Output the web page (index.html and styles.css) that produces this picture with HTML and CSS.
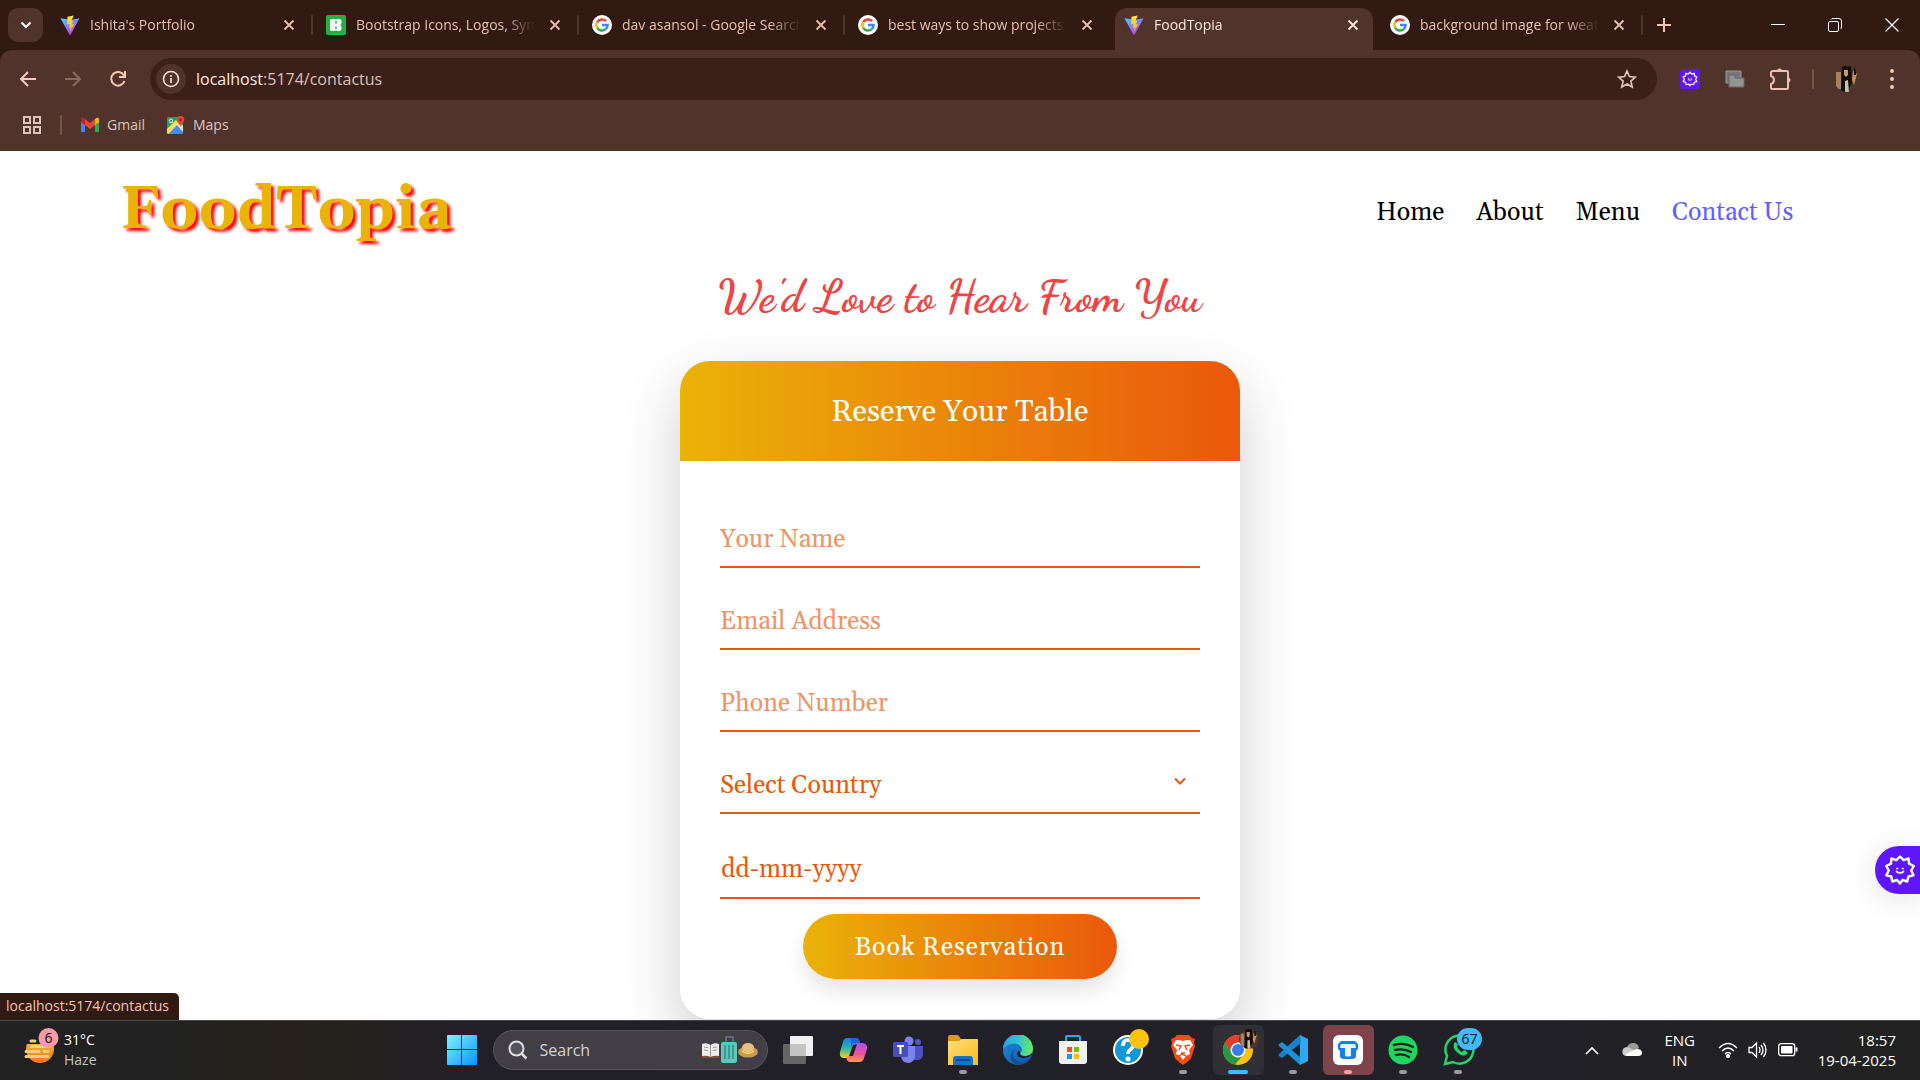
FILE: index.html
```html
<!DOCTYPE html>
<html lang="en">
<head>
<meta charset="utf-8">
<title>FoodTopia</title>
<link rel="stylesheet" href="styles.css">
</head>
<body>
<svg class="defs" width="0" height="0" aria-hidden="true">
  <defs>
    <linearGradient id="vitePurple" x1="0" y1="0" x2="0.7" y2="1"><stop offset="0" stop-color="#41d1ff"/><stop offset="1" stop-color="#bd34fe"/></linearGradient>
    <linearGradient id="viteBolt" x1="0" y1="0" x2="0" y2="1"><stop offset="0" stop-color="#ffea3a"/><stop offset="1" stop-color="#ffa800"/></linearGradient>
    <linearGradient id="winBlue" x1="0" y1="0" x2="1" y2="1"><stop offset="0" stop-color="#7df3ff"/><stop offset="1" stop-color="#0a93fb"/></linearGradient>
    <linearGradient id="folderGold" x1="0" y1="0" x2="1" y2="1"><stop offset="0" stop-color="#ffe07a"/><stop offset="1" stop-color="#fbb91a"/></linearGradient>
    <linearGradient id="edgeGreen" x1="0" y1="0.4" x2="1" y2="0.5"><stop offset="0" stop-color="#2aa5e0"/><stop offset="0.5" stop-color="#2fc6cf"/><stop offset="1" stop-color="#6cea52"/></linearGradient>
    <linearGradient id="edgeBlue" x1="0" y1="0" x2="1" y2="1"><stop offset="0" stop-color="#1c8fe0"/><stop offset="1" stop-color="#1250a0"/></linearGradient>
    <linearGradient id="copLeft" x1="0" y1="0" x2="0" y2="1"><stop offset="0" stop-color="#1b7af0"/><stop offset="0.5" stop-color="#29b6a8"/><stop offset="1" stop-color="#f5d51f"/></linearGradient>
    <linearGradient id="copRight" x1="0" y1="0" x2="0" y2="1"><stop offset="0" stop-color="#a84ef0"/><stop offset="0.6" stop-color="#f3558f"/><stop offset="1" stop-color="#ff9a4d"/></linearGradient>
    <linearGradient id="hazeSun" x1="0" y1="0" x2="0" y2="1"><stop offset="0" stop-color="#ffc830"/><stop offset="1" stop-color="#f0761a"/></linearGradient>
    <clipPath id="avatarClip"><circle cx="13" cy="13" r="13"/></clipPath>
    <symbol id="vite" viewBox="0 0 24 24"><path d="M.5 4 11.3 23.300a.9.9 0 0 0 1.500 0L23.500 4 13 5.700Z" fill="url(#vitePurple)"/><path d="M16.500.500 9 2 8.400 11.500l3-.6-.9 4.600 2.300-.6-1.500 6 6-10-3 .6 1.500-4.500-2.300.4Z" fill="url(#viteBolt)"/></symbol>
    <symbol id="google" viewBox="0 0 24 24"><circle cx="12" cy="12" r="12" fill="#fff"/><g fill="none" stroke-width="3"><path d="M6.300 8.600A6.700 6.700 0 0 1 16.900 7.400" stroke="#ea4335"/><path d="M6.300 15.400A6.700 6.700 0 0 1 6.300 8.600" stroke="#fbbc05"/><path d="M16.500 17A6.700 6.700 0 0 1 6.300 15.400" stroke="#34a853"/><path d="M12 12H18.700A6.700 6.700 0 0 1 16.500 17" stroke="#4285f4"/></g></symbol>
    <symbol id="icons8" viewBox="0 0 20 20"><rect width="20" height="20" rx="2" fill="#1fb141"/><path d="M4 5.500A1.500 1.500 0 0 1 5.500 4H9l1 1 1-1h2.500A2 2 0 0 1 15.500 6v2l-1 2 1 2v2a2 2 0 0 1-2 2H11l-1-1-1 1H5.500A1.500 1.500 0 0 1 4 14.500Z" fill="#fff"/><path d="M10 6v2.500M10 11.500V14" stroke="#1fb141" stroke-width="1.500"/></symbol>
    <symbol id="close" viewBox="0 0 12 12"><path d="m1.500 1.500 9 9m0-9-9 9" stroke="currentColor" stroke-width="1.800" fill="none"/></symbol>
    <symbol id="face" viewBox="0 0 32 32"><path d="M16 2.500 19.700 6.200 24.600 4.500 25 9.700 29.800 12 27.200 16.500 29.500 21.300 24.500 22.500 23.200 27.500 18.500 26 16 29.500 13 26 8.300 27.500 7.300 22.500 2.300 21.300 4.800 16.500 2.200 12 7 9.700 7.400 4.500 12.300 6.200Z" fill="none" stroke="#fff" stroke-width="2.400" stroke-linejoin="round"/><path d="M13 14.500h.5m5 0h.5M12.500 17.500q3.500 2.800 7 0" fill="none" stroke="#fff" stroke-width="1.700" stroke-linecap="round"/></symbol>
    <symbol id="portrait" viewBox="0 0 26 26"><g clip-path="url(#avatarClip)"><path fill="#4a382a" d="M0 0h26v26H0z"/><path d="M2 6h5v17H2z" fill="#a08358"/><path d="M8 0h9l1 17-5 9H7Z" fill="#100d0b"/><path d="M10 4h4v5l-2 2-2-2Z" fill="#c99974"/><path d="m11 15 3-1 1 13h-4Z" fill="#cdbf9f"/><path d="m19 5 4 3-3 11-2-5Z" fill="#c58e5c"/><path d="M20 0h2v9h-2z" fill="#17110d"/></g></symbol>
  </defs>
</svg>

<header class="browser">
  <div class="tabstrip">
    <button class="tab-search" aria-label="Search tabs"><svg width="12" height="8" viewBox="0 0 12 8"><path d="m1.500 1.500 4.500 4.500 4.500-4.500" fill="none" stroke="#fff" stroke-width="2"/></svg></button>
    <nav class="tabs" aria-label="Tabs">
      <div class="tab"><svg class="favicon"><use href="#vite"/></svg><span class="tab-label">Ishita's Portfolio</span><button class="tab-close" aria-label="Close tab"><svg><use href="#close"/></svg></button></div>
      <div class="tab"><svg class="favicon"><use href="#icons8"/></svg><span class="tab-label">Bootstrap Icons, Logos, Symbols</span><button class="tab-close" aria-label="Close tab"><svg><use href="#close"/></svg></button></div>
      <div class="tab"><svg class="favicon"><use href="#google"/></svg><span class="tab-label">dav asansol - Google Search</span><button class="tab-close" aria-label="Close tab"><svg><use href="#close"/></svg></button></div>
      <div class="tab before-active"><svg class="favicon"><use href="#google"/></svg><span class="tab-label">best ways to show projects on</span><button class="tab-close" aria-label="Close tab"><svg><use href="#close"/></svg></button></div>
      <div class="tab active"><svg class="favicon"><use href="#vite"/></svg><span class="tab-label">FoodTopia</span><button class="tab-close" aria-label="Close tab"><svg><use href="#close"/></svg></button></div>
      <div class="tab"><svg class="favicon"><use href="#google"/></svg><span class="tab-label">background image for weather</span><button class="tab-close" aria-label="Close tab"><svg><use href="#close"/></svg></button></div>
    </nav>
    <button class="new-tab" aria-label="New tab"><svg width="14" height="14" viewBox="0 0 14 14"><path d="M7 0v14M0 7h14" stroke="#f2c4b3" stroke-width="2"/></svg></button>
    <div class="window-controls">
      <button aria-label="Minimize"><svg width="14" height="14"><path d="M0 6.500h14" stroke="#fff"/></svg></button>
      <button aria-label="Restore"><svg width="14" height="14" fill="none" stroke="#fff"><rect x=".5" y="3.500" width="10" height="10" rx="1.500"/><path d="M3 1.500q.5-1 2-1h6q2.500 0 2.500 2.500v6q0 1.500-1 2"/></svg></button>
      <button aria-label="Close window"><svg width="14" height="14"><path d="m.5.500 13 13m0-13-13 13" stroke="#fff" stroke-width="1.200"/></svg></button>
    </div>
  </div>
  <div class="toolbar">
    <button class="tool" aria-label="Back"><svg width="18" height="18" viewBox="0 0 18 18"><path d="M17 9H2m7-7L2 9l7 7" fill="none" stroke="#f5c9b9" stroke-width="2"/></svg></button>
    <button class="tool" aria-label="Forward"><svg width="18" height="18" viewBox="0 0 18 18"><path d="M1 9h15M9 2l7 7-7 7" fill="none" stroke="#8b6a60" stroke-width="2"/></svg></button>
    <button class="tool" aria-label="Reload"><svg width="18" height="18" viewBox="0 0 18 18"><path d="M15.500 11A6.800 6.800 0 1 1 15 5.500M16 1v6h-6" fill="none" stroke="#f5c9b9" stroke-width="2"/></svg></button>
    <div class="omnibox">
      <button class="site-info" aria-label="Site information"><svg width="18" height="18" viewBox="0 0 18 18"><circle cx="9" cy="9" r="7.500" fill="none" stroke="#f3e2dc" stroke-width="1.600"/><path d="M9 8v5M9 5v1.700" stroke="#f3e2dc" stroke-width="1.700"/></svg></button>
      <span class="url"><b>localhost</b>:5174/contactus</span>
      <button class="star" aria-label="Bookmark this tab"><svg width="20" height="20" viewBox="0 0 20 20"><path d="m10 2 2.400 5.500 6 .6-4.500 4 1.300 5.900L10 14.900 4.800 18l1.300-5.900-4.500-4 6-.6Z" fill="none" stroke="#dcc4bc" stroke-width="1.700"/></svg></button>
    </div>
    <div class="extensions">
      <button class="tool purple" aria-label="Assistant extension"><svg width="16" height="16"><use href="#face"/></svg></button>
      <button class="tool" aria-label="Windows extension"><svg width="20" height="20" viewBox="0 0 20 20"><path d="M1 2h15v12H1z" fill="#777" stroke="#999"/><path d="M4 6h6v3h9v9H4z" fill="#939393" stroke="#666"/></svg></button>
      <button class="tool" aria-label="Extensions"><svg width="22" height="26" viewBox="0 0 22 26"><path d="M4 5h14q1 0 1 1v16q0 1-1 1H3q-1 0-1-1v-4q3-.8 3-4t-3-4V7q0-2 2-2Z" fill="none" stroke="#f0bfae" stroke-width="2" stroke-linejoin="round"/><path d="M8 5a2.500 2.500 0 0 1 5 0ZM19 11.500a2.500 2.500 0 0 1 0 5Z" fill="#f0bfae"/></svg></button>
      <span class="divider"></span>
      <button class="tool" aria-label="Profile"><svg width="26" height="26"><use href="#portrait"/></svg></button>
      <button class="tool" aria-label="Menu"><svg width="6" height="22" fill="#f5c9b9"><circle cx="3" cy="3" r="2"/><circle cx="3" cy="11" r="2"/><circle cx="3" cy="19" r="2"/></svg></button>
    </div>
  </div>
  <div class="bookmarks">
    <button class="apps" aria-label="Apps"><svg width="18" height="18" fill="none" stroke="#d9c3bb" stroke-width="2"><path d="M1 1h6v6H1zM11 1h6v6h-6zM1 11h6v6H1zM11 11h6v6h-6z"/></svg></button>
    <span class="divider"></span>
    <a href="#gmail"><svg width="18" height="18" viewBox="0 0 18 18"><path d="M0 5h4v11H1q-1 0-1-1Z" fill="#4285f4"/><path d="M14 5h4v10q0 1-1 1h-3Z" fill="#34a853"/><path d="M14 3q4-3 4 1v2l-4 3Z" fill="#fbbc04"/><path d="M0 4q0-4 4-1l5 4 5-4v6l-5 4-5-4-4-3Z" fill="#ea4335"/><path d="M0 6V4q0-4 4-1v6Z" fill="#c5221f"/></svg>Gmail</a>
    <a href="#maps"><svg width="18" height="18" viewBox="0 0 18 18"><rect y="1" width="16" height="17" rx="1.500" fill="#1fa463"/><path d="m0 16 9-8 7 8v1l-1 1H1z" fill="#4a89f3"/><path d="m0 13 9-9 3 3L1.500 18 0 17Z" fill="#fddc4e"/><path d="m9 8 7 8v-6l-3-4Z" fill="#e8e6dc"/><path d="M13.500 0a3.800 3.800 0 0 1 3.800 3.800c0 3-3 3.700-3.800 7.200-.8-3.500-3.800-4.200-3.800-7.200A3.800 3.800 0 0 1 13.500 0Z" fill="#ea4335"/><circle cx="13.500" cy="3.800" r="1.300" fill="#8c2018"/><circle cx="4" cy="5" r="1.700" fill="none" stroke="#fff"/></svg>Maps</a>
  </div>
</header>

<main class="page">
  <header class="site-header">
    <h1 class="logo">FoodTopia</h1>
    <nav class="site-nav" aria-label="Main">
      <a href="#home">Home</a><a href="#about">About</a><a href="#menu">Menu</a><a class="current" href="#contactus">Contact Us</a>
    </nav>
  </header>
  <h2 class="tagline">We'd Love to Hear From You</h2>
  <section class="card">
    <h3 class="card-title">Reserve Your Table</h3>
    <form class="form">
      <input class="field" type="text" aria-label="Your Name" placeholder="Your Name">
      <input class="field" type="email" aria-label="Email Address" placeholder="Email Address">
      <input class="field" type="tel" aria-label="Phone Number" placeholder="Phone Number">
      <div class="select-wrap">
        <select class="field" aria-label="Country"><option>Select Country</option></select>
        <svg class="select-arrow" width="12" height="8" viewBox="0 0 12 8"><path d="m1 1.500 5 5 5-5" fill="none" stroke="#ea580c" stroke-width="2"/></svg>
      </div>
      <input class="field date" type="text" aria-label="Date" placeholder="dd-mm-yyyy">
      <button class="submit" type="button">Book Reservation</button>
    </form>
  </section>
  <button class="assistant" aria-label="Open assistant"><svg width="32" height="32"><use href="#face"/></svg></button>
  <div class="status">localhost:5174/contactus</div>
</main>

<footer class="taskbar">
  <button class="weather">
    <svg width="36" height="38" viewBox="0 0 36 38"><circle cx="16" cy="21" r="14" fill="url(#hazeSun)"/><path d="M0 0h36v16H0z" fill="#212121"/><path d="M7 13h4M7 18.500h20M2 23.500h13m5 0h4M2 28.500h22" stroke="#edcf83" stroke-width="3" stroke-linecap="round"/><circle cx="24.500" cy="10" r="10" fill="#ff99a4"/><text x="24.500" y="15" text-anchor="middle" class="badge-text">6</text></svg>
    <span class="weather-text"><span>31°C</span><span class="muted">Haze</span></span>
  </button>
  <div class="dock">
    <button class="cell" aria-label="Start"><svg width="30" height="30"><path d="M1 0h13v14H0V1q0-1 1-1Zm14 0h14q1 0 1 1v13H15ZM0 15h14v15H1q-1 0-1-1Zm15 0h15v14q0 1-1 1H15Z" fill="url(#winBlue)"/></svg></button>
    <label class="search">
      <svg width="20" height="20" viewBox="0 0 20 20"><circle cx="8.500" cy="8.500" r="7" fill="#55545a" stroke="#dedede" stroke-width="2"/><path d="m13.500 13.500 5 5" stroke="#dedede" stroke-width="2.500"/></svg>
      <input type="text" aria-label="Search" placeholder="Search">
      <svg width="58" height="30" viewBox="0 0 58 30"><path d="M1 10h17v13H1z" fill="#80502e"/><path d="M1 9q5-2 8.500 1Q13 7 18 9v12q-5-1-8.500 1Q6 20 1 21Z" fill="#ededed"/><path d="M9.500 10v12M3 12l4 .5M3 15l4 .5m5-3 4-.5m-4 3.500 4-.5" stroke="#999"/><path d="M25 7V2h7v5" fill="none" stroke="#6c7488" stroke-width="1.500"/><rect x="20" y="7" width="16" height="21" rx="2" fill="#5fc7b8"/><path d="M24 10v14m4-14v14m4-14v14" stroke="#2f8f86" stroke-width="1.500"/><ellipse cx="47" cy="17" rx="10" ry="5.500" fill="#c8995a"/><ellipse cx="47" cy="12.500" rx="6" ry="4.500" fill="#e7c181"/><path d="M41 15q6 5 12 0v2q-6 4-12 0Z" fill="#ffdc42"/></svg>
    </label>
    <button class="cell" aria-label="Task view"><svg width="30" height="28"><rect y="8" width="23" height="20" rx="1" fill="#666"/><rect x="7" width="23" height="20" rx="1" fill="#f1f1f1"/><path d="M7 8h16v12H7z" fill="#c5c5c5"/></svg></button>
    <button class="cell" aria-label="Copilot"><svg width="28" height="26" viewBox="0 0 28 26"><path d="M8 1h9q3 0 4 5l-5 1-4 12q-1 2-3 2H4Q0 20 1 15L4 5Q5 1 8 1Z" fill="url(#copLeft)"/><path d="M20 25h-9q-3 0-4-5l4-1 4-11q1-2 3-2h6q5 1 4 6l-3 9q-1 4-5 4Z" fill="url(#copRight)"/><path d="m14 8-4 11h4l4-12Z" fill="#20202a"/><path d="M12 1h5q3 0 4 5h-5q-3 0-4 5Z" fill="#2262d8"/></svg></button>
    <button class="cell" aria-label="Teams"><svg width="30" height="28" viewBox="0 0 30 28"><circle cx="25" cy="6" r="3" fill="#4f55c4"/><path d="M20 10h10v9q-1 5-6 5h-4z" fill="#4b53c3"/><circle cx="16" cy="5" r="4.500" fill="#7b83eb"/><path d="M8 10h14v10q-1 7-7 7t-7-7Z" fill="#7b83eb"/><rect y="6" width="15" height="15" rx="1.500" fill="#464eb8"/><path d="M4 10h7m-3.500 0v8" stroke="#fff" stroke-width="2"/></svg></button>
    <button class="cell open" aria-label="File Explorer"><svg width="30" height="30" viewBox="0 0 30 30"><path d="M0 2q0-2 2-2h8l3 4h15q2 0 2 2v5H0Z" fill="#dd9a0a"/><path d="M0 7q0-1 1-1h10l3-2h15q1 0 1 1v25H0Z" fill="url(#folderGold)"/><path d="M5 30v-6q0-3 3-3h14q3 0 3 3v6Z" fill="#1473c6"/><path d="M9 25h12" stroke="#0c4f8e" stroke-width="2" stroke-linecap="round"/></svg></button>
    <button class="cell" aria-label="Edge"><svg width="30" height="30" viewBox="0 0 30 30"><circle cx="15" cy="15" r="15" fill="url(#edgeBlue)"/><path d="M0 14A15 15 0 0 1 30 14Q30 21 22 21 17 21 17 18 20 16 18 12 14 7 8 9 3 10 0 14Z" fill="url(#edgeGreen)"/><path d="M11 14Q8 22 15 26q6 3 13-3Q22 31 13 30 3 24 11 14Z" fill="#174f98"/><path d="M29 20q-7 5-13 2-3-2-1-6 2 0 2 2 1 4 7 3 3-1 5-3Z" fill="#212127"/></svg></button>
    <button class="cell" aria-label="Microsoft Store"><svg width="30" height="30" viewBox="0 0 30 30"><path d="M8 6V2q0-1 1-1h12q1 0 1 1v4" fill="none" stroke="#27a9ea" stroke-width="2"/><path d="M1 6h28v20q0 3-3 3H4q-3 0-3-3Z" fill="#f1f1f1"/><path d="M9 12h5v5H9z" fill="#f25022"/><path d="M16 12h5v5h-5z" fill="#7fba00"/><path d="M9 19h5v5H9z" fill="#00a4ef"/><path d="M16 19h5v5h-5z" fill="#ffb900"/></svg></button>
    <button class="cell" aria-label="Help"><svg class="badged" width="42" height="38" viewBox="-5 0 42 38"><circle cx="16" cy="22" r="14" fill="#1297d8" stroke="#fff" stroke-width="2"/><path d="M11 18q0-6 5-6t5 5q0 3-3 5-2 1-2 4" fill="none" stroke="#fff" stroke-width="3.500"/><circle cx="16" cy="31" r="2.500" fill="#fff"/><circle cx="27" cy="11" r="10" fill="#ffc20e"/></svg></button>
    <button class="cell open" aria-label="Brave"><svg width="26" height="32" viewBox="0 0 26 30"><path d="m7 0-3 3-3 1 1 4-1 3 4 12q1 2 8 7 7-5 8-7l4-12-1-3 1-4-3-1-3-3Z" fill="#fb4a14"/><path d="M6 5h3l4 1 4-1h3l3 5-4 5 1 4-4 2-3 4-3-4-4-2 1-4-4-5Z" fill="#fff"/><path d="m6 10 5 1-2 4m11-5-5 1 2 4m-6 3h4m-6 3 3-2 4 2" fill="none" stroke="#fb4a14" stroke-width="1.500"/></svg></button>
    <button class="cell open focused" aria-label="Chrome"><svg class="badged" width="42" height="38" viewBox="-6 0 42 38"><circle cx="15" cy="22" r="15" fill="#fbc116"/><path d="M2 14.500A15 15 0 0 1 28 14.500H15L9 26Z" fill="#e33b2e"/><path d="M2 14.500 9 26l6 3.500-3 7.200A15 15 0 0 1 2 14.500Z" fill="#249a42"/><path d="m21.500 25.500-9.500 11-1-8Z" fill="#249a42"/><circle cx="15" cy="22" r="7.500" fill="#fff"/><circle cx="15" cy="22" r="6" fill="#397de8"/><svg x="16" y="0" width="20" height="22" viewBox="0 0 26 26"><use href="#portrait"/></svg></svg></button>
    <button class="cell open" aria-label="Visual Studio Code"><svg width="30" height="32" viewBox="0 0 30 30"><path d="M22 0 30 4v22l-8 4Z" fill="#2fa8f2"/><path d="m22 0 1 8L4 23l-3-2q-1-1 0-2Z" fill="#1682cf"/><path d="M22 30V22L4 7 1 9q-1 1 0 2Z" fill="#1e8ed8"/></svg></button>
    <button class="cell open alert" aria-label="App"><svg width="30" height="30" viewBox="0 0 30 30"><rect width="30" height="30" rx="6" fill="#fff"/><path d="M8 6h14l3 3v5l-2 2v5q0 3-4 3h-8q-4 0-4-3v-5l-2-2V9Z" fill="#1480ec"/><path d="M8 9h14l1 4h-5v8q-3 1-6 0v-8H7Z" fill="#eaf4ff"/></svg></button>
    <button class="cell open" aria-label="Spotify"><svg width="30" height="30" viewBox="0 0 30 30"><circle cx="15" cy="15" r="14.500" fill="#1fd760"/><path d="M6 10q10-3 19 2M7 15q9-2 16 2M8 20q7-2 13 2" fill="none" stroke="#17201a" stroke-width="2.400" stroke-linecap="round"/></svg></button>
    <button class="cell open" aria-label="WhatsApp"><svg class="badged" width="50" height="38" viewBox="-9 0 50 38"><path d="m3 36 2-8A14 14 0 1 1 11 34Z" fill="none" stroke="#25d366" stroke-width="2.500"/><path d="M12 15q2-2 4 2l-1 2q2 4 5 5l2-2q5 2 3 4-3 3-8 0-7-5-5-11Z" fill="#25d366"/><rect x="15" y="0" width="25" height="22" rx="11" fill="#43b9fb"/><text x="27.500" y="16" text-anchor="middle" class="badge-text">67</text></svg></button>
  </div>
  <div class="tray">
    <button class="tray-icon" aria-label="Hidden icons"><svg width="14" height="9"><path d="m1 8 6-6 6 6" fill="none" stroke="#fff" stroke-width="1.600"/></svg></button>
    <button class="tray-icon" aria-label="OneDrive"><svg width="20" height="14" viewBox="0 0 20 14"><path d="M1 9a4 4 0 0 1 4-5q2-4 6-4 5 0 6 5l-6 4Z" fill="#999"/><path d="M1 6q3-3 7-1l7 4-5 4H4q-5-1-3-7Z" fill="#ccc"/><path d="M3 12q3-2 7-4t5-2q5 0 5 4 0 3-4 3H5Z" fill="#fff"/></svg></button>
    <button class="lang"><span>ENG</span><span>IN</span></button>
    <button class="tray-group" aria-label="Network, sound and battery">
      <svg width="20" height="16" viewBox="0 0 20 16" fill="none" stroke="#fff" stroke-width="1.500"><path d="M1 6q9-9 18 0M4 9q6-6 12 0M7 12q3-3 6 0"/><circle cx="10" cy="14" r="1.300" fill="#fff"/></svg>
      <svg width="20" height="18" viewBox="0 0 20 18" fill="none" stroke="#fff" stroke-width="1.300"><path d="M1 6.500h3L8.500 2v14L4 11.500H1ZM11 6q2 3 0 6m2-8q4 5 0 10m2.500-12q5 7 0 14"/></svg>
      <svg width="20" height="14" viewBox="0 0 20 14"><rect x=".7" y=".7" width="16" height="12" rx="2.500" fill="none" stroke="#fff" stroke-width="1.300"/><rect x="3" y="3" width="11.500" height="7.500" rx="1" fill="#fff"/><path d="M18.500 4.500v4" stroke="#fff" stroke-width="2"/></svg>
    </button>
    <button class="clock"><span>18:57</span><span>19-04-2025</span></button>
  </div>
</footer>
</body>
</html>
```
FILE: styles.css
```css
* { box-sizing: border-box; }
body { margin: 0; min-height: 100vh; display: flex; flex-direction: column; background: #fff; font-family: "Segoe UI", "Open Sans", "Noto Sans", sans-serif; font-size: 14px; }
button { border: 0; padding: 0; margin: 0; background: none; color: inherit; font: inherit; display: flex; align-items: center; justify-content: center; }
svg { display: block; flex: none; }
a { text-decoration: none; color: inherit; }
.defs { position: absolute; }

/* Browser window */
.browser { background: #321a12; color: #e7bfb1; }
.tabstrip { display: flex; align-items: center; height: 50px; padding-left: 8px; }
.tab-search { width: 35px; height: 34px; border-radius: 10px; background: #50342b; margin-right: 4px; }
.tabs { display: flex; min-width: 0; align-self: stretch; }
.tab { display: flex; align-items: center; width: 266px; min-width: 0; padding: 0 16px 0 13px; position: relative; }
.tab::after { content: ""; position: absolute; right: 0; top: 15px; width: 2px; height: 20px; border-radius: 1px; background: #50342b; }
.tab.before-active::after, .tab.active::after { display: none; }
.favicon { width: 20px; height: 20px; margin-right: 10px; }
.tab-label { flex: 1; min-width: 0; overflow: hidden; white-space: nowrap; line-height: 20px; -webkit-mask-image: linear-gradient(to right, #000 calc(100% - 32px), transparent); mask-image: linear-gradient(to right, #000 calc(100% - 32px), transparent); }
.tab-close { width: 16px; height: 16px; margin-left: 12px; }
.tab-close svg { width: 12px; height: 12px; }
.tab.active { color: #fbe6df; z-index: 0; }
.tab.active::before { content: ""; position: absolute; z-index: -1; inset: 8px 4px 0; border-radius: 12px 12px 0 0; background: #50342b; }
.new-tab { width: 42px; height: 34px; }
.window-controls { margin-left: auto; display: flex; }
.window-controls button { width: 57px; height: 48px; }
.toolbar { display: flex; align-items: center; height: 58px; padding: 0 6px 0 5px; background: #50342b; border-radius: 12px 12px 0 0; }
.tool { width: 45px; height: 36px; }
.omnibox { flex: 1; display: flex; align-items: center; height: 42px; margin: 0 10px; padding: 0 16px 0 6px; border-radius: 21px; background: #3a2018; font-size: 16px; color: #dcc0b6; }
.site-info { width: 30px; height: 30px; border-radius: 50%; background: #50342b; }
.url { flex: 1; margin-left: 10px; }
.url b { font-weight: 400; color: #fbeae4; }
.star { width: 28px; height: 28px; }
.extensions { display: flex; align-items: center; }
.purple svg { width: 20px; height: 20px; padding: 2px; border-radius: 4px; background: #5f16fb; }
.divider { width: 2px; height: 20px; border-radius: 1px; background: #75554a; }
.extensions .divider { margin: 0 10px; }
.bookmarks { display: flex; align-items: center; height: 43px; padding: 0 23px 10px; background: #50342b; color: #ddc6be; }
.bookmarks .divider { margin: 0 19px; }
.bookmarks a { display: flex; align-items: center; gap: 8px; margin-right: 22px; line-height: 20px; }

/* Restaurant page */
.page { flex: 1; position: relative; overflow: hidden; font-family: Georgia, Gelasio, "Liberation Serif", serif; }
.site-header { display: flex; align-items: center; justify-content: space-between; height: 120px; padding: 4px 6.6% 0 6.25%; }
.logo { margin: 0; padding-bottom: 4px; font-size: 60px; line-height: 80px; font-weight: 700; color: #eab308; text-shadow: 3px 3px 3px red; }
.site-nav { display: flex; gap: 32px; font-size: 25px; line-height: 32px; color: #000; }
.site-nav .current { color: #615fff; }
.tagline { margin: 0 0 38px; text-align: center; font: 700 45px/52px "Dancing Script", "Liberation Serif", cursive; color: #ef4444; }
.card { width: 560px; max-width: 100%; margin: 0 auto; border-radius: 30px; overflow: hidden; background: #fff; box-shadow: 0 24px 60px rgba(0, 0, 0, .2); }
.card-title { margin: 0; padding: 31px 0 29px; font-size: 30px; line-height: 40px; font-weight: 400; text-align: center; color: #fff; background: linear-gradient(90deg, #eab308, #ea580c); }
.form { display: flex; flex-direction: column; gap: 32px; padding: 57px 40px 40px; }
.field { display: block; width: 100%; height: 50px; padding: 0 0 4px; border: 0; border-bottom: 2px solid #ea580c; border-radius: 0; outline: 0; background: none; appearance: none; font: 25px/32px Georgia, Gelasio, "Liberation Serif", serif; color: #ea580c; }
.field::placeholder { color: #f09465; opacity: 1; }
.select-wrap { position: relative; }
.select-arrow { position: absolute; right: 14px; top: 13px; }
.date { height: 53px; padding-left: 1px; }
.date::placeholder { color: #ea580c; }
.submit { align-self: center; width: 314px; height: 65px; margin-top: -17px; padding-top: 2px; border-radius: 33px; font-size: 25px; letter-spacing: 1px; color: #fff; background: linear-gradient(90deg, #eab308, #ea580c); box-shadow: 0 12px 20px rgba(0, 0, 0, .1); }
.assistant { position: absolute; right: 0; bottom: 126px; width: 45px; height: 48px; padding-left: 4px; border-radius: 24px 0 0 24px; background: #5f16fb; box-shadow: 0 4px 30px rgba(0, 0, 0, .12); }
.status { position: absolute; left: 0; bottom: 0; padding: 3px 10px 4px 6px; border-radius: 0 5px 0 0; background: #321a12; color: #f0c3b3; font: 14px/20px "Segoe UI", "Open Sans", "Noto Sans", sans-serif; }

/* Taskbar */
.taskbar { display: grid; grid-template-columns: 1fr auto 1fr; align-items: center; height: 60px; padding-bottom: 1px; border-top: 1px solid #49494b; background: linear-gradient(90deg, #212121 9%, #26221a 15%, #212028 25%, #212127 80%, #222); color: #fff; }
.weather { justify-self: start; padding-left: 24px; gap: 4px; }
.weather svg, .badged { margin-bottom: 6px; }
.weather-text { display: flex; flex-direction: column; text-align: left; line-height: 20px; }
.muted { color: #c4c4c4; }
.badge-text { font: 14px "Segoe UI", "Open Sans", sans-serif; fill: #111; }
.dock { display: flex; align-items: center; }
.cell { width: 51px; height: 50px; margin: 0 2px; border-radius: 6px; position: relative; }
.cell.open::after { content: ""; position: absolute; bottom: 1px; left: calc(50% - 4px); width: 8px; height: 4px; border-radius: 2px; background: #9a9a9c; }
.cell.focused { background: #2f2f35; }
.cell.focused::after { left: calc(50% - 10px); width: 20px; background: #43b9fb; }
.cell.alert { background: #7f444b; }
.cell.alert::after { background: #ff99a4; }
.search { display: flex; align-items: center; width: 275px; height: 40px; margin: 0 3px; padding: 0 8px 0 14px; border: 1px solid #56555a; border-radius: 20px; background: #413f45; }
.search input { flex: 1; min-width: 0; margin-left: 12px; padding: 0; border: 0; outline: 0; background: none; font: 16px/24px "Segoe UI", "Open Sans", sans-serif; color: #fff; }
.search input::placeholder { color: #d2d2d4; opacity: 1; }
.tray { justify-self: end; display: flex; align-items: center; padding-right: 24px; line-height: 20px; }
.tray-icon { width: 40px; height: 40px; }
.lang, .clock { flex-direction: column; font-size: 15px; }
.lang { width: 56px; }
.tray-group { gap: 10px; margin: 0 20px 0 10px; }
.clock { align-items: flex-end; }
```
